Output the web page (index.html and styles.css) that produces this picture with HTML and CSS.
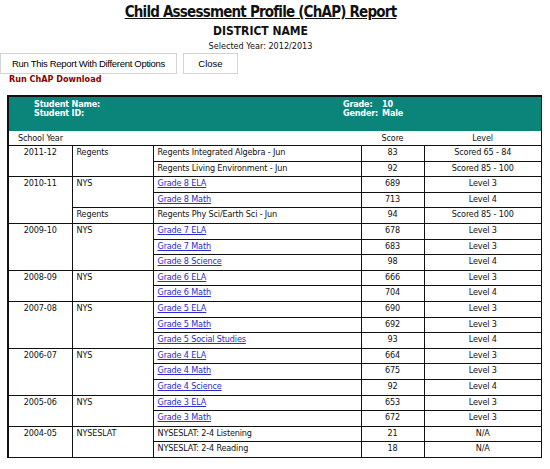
FILE: index.html
```html
<!DOCTYPE html>
<html>
<head>
    <title>ChAP Report</title>
    <link rel="stylesheet" href="styles.css">
</head>
<body>
    <div class="top">
        <h1 class="title">Child Assessment Profile (ChAP) Report</h1>
        <div class="district">DISTRICT NAME</div>
        <div class="year">Selected Year: 2012/2013</div>
    </div>
    <div class="buttons">
        <button class="btn btn-wide" type="button">Run This Report With Different Options</button>
        <button class="btn btn-close" type="button">Close</button>
    </div>
    <a class="download" href="javascript:void(0);">Run ChAP Download</a>

    <div class="report">
        <div class="student">
            <div class="who">
                <div>Student Name:</div>
                <div>Student ID:</div>
            </div>
            <div class="info">
                <span>Grade:</span><span>10</span>
                <span>Gender:</span><span>Male</span>
            </div>
        </div>
        <table class="scores">
            <colgroup>
                <col class="c-year">
                <col class="c-type">
                <col class="c-test">
                <col class="c-score">
                <col class="c-level">
            </colgroup>
            <thead>
                <tr>
                    <th class="left" colspan="3">School Year</th>
                    <th>Score</th>
                    <th>Level</th>
                </tr>
            </thead>
            <tbody>
                <tr>
                    <td class="yr" rowspan="2">2011-12</td>
                    <td class="type" rowspan="2">Regents</td>
                    <td>Regents Integrated Algebra - Jun</td>
                    <td class="num">83</td>
                    <td class="num">Scored 65 - 84</td>
                </tr>
                <tr>
                    <td>Regents Living Environment - Jun</td>
                    <td class="num">92</td>
                    <td class="num">Scored 85 - 100</td>
                </tr>
                <tr>
                    <td class="yr" rowspan="3">2010-11</td>
                    <td class="type" rowspan="2">NYS</td>
                    <td><a href="#">Grade 8 ELA</a></td>
                    <td class="num">689</td>
                    <td class="num">Level 3</td>
                </tr>
                <tr>
                    <td><a href="#">Grade 8 Math</a></td>
                    <td class="num">713</td>
                    <td class="num">Level 4</td>
                </tr>
                <tr>
                    <td class="type">Regents</td>
                    <td>Regents Phy Sci/Earth Sci - Jun</td>
                    <td class="num">94</td>
                    <td class="num">Scored 85 - 100</td>
                </tr>
                <tr>
                    <td class="yr" rowspan="3">2009-10</td>
                    <td class="type" rowspan="3">NYS</td>
                    <td><a href="#">Grade 7 ELA</a></td>
                    <td class="num">678</td>
                    <td class="num">Level 3</td>
                </tr>
                <tr>
                    <td><a href="#">Grade 7 Math</a></td>
                    <td class="num">683</td>
                    <td class="num">Level 3</td>
                </tr>
                <tr>
                    <td><a href="#">Grade 8 Science</a></td>
                    <td class="num">98</td>
                    <td class="num">Level 4</td>
                </tr>
                <tr>
                    <td class="yr" rowspan="2">2008-09</td>
                    <td class="type" rowspan="2">NYS</td>
                    <td><a href="#">Grade 6 ELA</a></td>
                    <td class="num">666</td>
                    <td class="num">Level 3</td>
                </tr>
                <tr>
                    <td><a href="#">Grade 6 Math</a></td>
                    <td class="num">704</td>
                    <td class="num">Level 4</td>
                </tr>
                <tr>
                    <td class="yr" rowspan="3">2007-08</td>
                    <td class="type" rowspan="3">NYS</td>
                    <td><a href="#">Grade 5 ELA</a></td>
                    <td class="num">690</td>
                    <td class="num">Level 3</td>
                </tr>
                <tr>
                    <td><a href="#">Grade 5 Math</a></td>
                    <td class="num">692</td>
                    <td class="num">Level 3</td>
                </tr>
                <tr>
                    <td><a href="#">Grade 5 Social Studies</a></td>
                    <td class="num">93</td>
                    <td class="num">Level 4</td>
                </tr>
                <tr>
                    <td class="yr" rowspan="3">2006-07</td>
                    <td class="type" rowspan="3">NYS</td>
                    <td><a href="#">Grade 4 ELA</a></td>
                    <td class="num">664</td>
                    <td class="num">Level 3</td>
                </tr>
                <tr>
                    <td><a href="#">Grade 4 Math</a></td>
                    <td class="num">675</td>
                    <td class="num">Level 3</td>
                </tr>
                <tr>
                    <td><a href="#">Grade 4 Science</a></td>
                    <td class="num">92</td>
                    <td class="num">Level 4</td>
                </tr>
                <tr>
                    <td class="yr" rowspan="2">2005-06</td>
                    <td class="type" rowspan="2">NYS</td>
                    <td><a href="#">Grade 3 ELA</a></td>
                    <td class="num">653</td>
                    <td class="num">Level 3</td>
                </tr>
                <tr>
                    <td><a href="#">Grade 3 Math</a></td>
                    <td class="num">672</td>
                    <td class="num">Level 3</td>
                </tr>
                <tr>
                    <td class="yr end" rowspan="2">2004-05</td>
                    <td class="type end" rowspan="2">NYSESLAT</td>
                    <td>NYSESLAT: 2-4 Listening</td>
                    <td class="num">21</td>
                    <td class="num">N/A</td>
                </tr>
                <tr class="last">
                    <td>NYSESLAT: 2-4 Reading</td>
                    <td class="num">18</td>
                    <td class="num">N/A</td>
                </tr>
            </tbody>
        </table>
    </div>
</body>
</html>
```

FILE: styles.css
```css
body {
    margin: 0;
    padding: 0;
    font-family: "DejaVu Sans Condensed", "DejaVu Sans", sans-serif;
    font-size: 9px;
    color: #111;
    background-color: #fff;
}

.top {
    width: 521px;
    text-align: center;
}

.title {
    margin: 0;
    padding-top: 2px;
    font-size: 15px;
    line-height: 21px;
    text-decoration: underline;
    letter-spacing: -0.8px;
}

.district {
    font-size: 12px;
    font-weight: bold;
    line-height: 15px;
    margin-top: 1px;
}

.year {
    font-size: 9px;
    line-height: 14px;
}

.buttons {
    display: flex;
    gap: 6px;
}

.btn {
    height: 21px;
    background-color: #fff;
    border: 1px solid #d4d4d4;
    font-family: "Liberation Sans", Arial, sans-serif;
    font-size: 9.5px;
    letter-spacing: -0.3px;
    color: #000;
    padding: 0;
    white-space: nowrap;
}

.btn-wide {
    width: 177px;
}

.btn-close {
    width: 55px;
    letter-spacing: 0;
}

.download {
    display: block;
    margin: 0 0 0 9px;
    font-weight: bold;
    font-size: 9px;
    line-height: 10px;
    color: #8b0000;
    text-decoration: none;
}

.report {
    margin: 11px 0 0 7px;
    width: 532px;
    border: 2px solid #111;
    border-right-width: 1px;
    border-bottom-width: 1px;
}

.student {
    background-color: #0b857a;
    color: #fff;
    font-weight: bold;
    letter-spacing: -0.2px;
    height: 34px;
    box-sizing: border-box;
    padding: 3px 0 0 25px;
    display: flex;
    align-items: flex-start;
    line-height: 9px;
}

.who {
    width: 309px;
}

.info {
    display: grid;
    grid-template-columns: auto auto;
    column-gap: 4px;
    white-space: nowrap;
}

.scores {
    width: 100%;
    border-collapse: collapse;
    table-layout: fixed;
    letter-spacing: -0.15px;
}

.c-year { width: 63px; }
.c-type { width: 81px; }
.c-test { width: 208px; }
.c-score { width: 63px; }

.scores th {
    font-weight: normal;
    height: 14px;
    padding: 0;
    border-bottom: 1px solid #111;
    text-align: center;
}

.scores th.left {
    text-align: left;
    padding-left: 9px;
}

.scores td {
    border: 1px solid #111;
    height: 13.6px;
    padding: 1px 0 0 4px;
    vertical-align: top;
    white-space: nowrap;
    overflow: hidden;
}

.scores td.yr {
    text-align: center;
    padding-left: 0;
    border-left: none;
}

.scores td.num {
    text-align: center;
    padding-left: 0;
}

.scores tr td:last-child {
    border-right: none;
}

.scores tr.last td,
.scores td.end {
    border-bottom: none;
}

.scores a {
    color: #2b2bd0;
}
```
